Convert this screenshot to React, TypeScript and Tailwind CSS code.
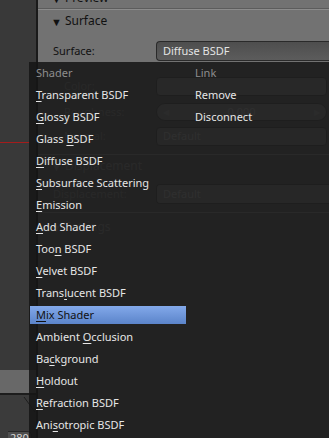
const SHADERS: { label: string; key: number; active?: boolean }[] = [
  { label: "Transparent BSDF", key: 0 },
  { label: "Glossy BSDF", key: 0 },
  { label: "Glass BSDF", key: 6 },
  { label: "Diffuse BSDF", key: 0 },
  { label: "Subsurface Scattering", key: 0 },
  { label: "Emission", key: 0 },
  { label: "Add Shader", key: 0 },
  { label: "Toon BSDF", key: 3 },
  { label: "Velvet BSDF", key: 0 },
  { label: "Translucent BSDF", key: 5 },
  { label: "Mix Shader", key: 0, active: true },
  { label: "Ambient Occlusion", key: 8 },
  { label: "Background", key: 2 },
  { label: "Holdout", key: 0 },
  { label: "Refraction BSDF", key: 0 },
  { label: "Anisotropic BSDF", key: 3 },
];

function Accel({ label, index }: { label: string; index: number }) {
  return (
    <span className="whitespace-nowrap">
      {label.slice(0, index)}
      <span className="underline underline-offset-2 decoration-1">{label[index]}</span>
      {label.slice(index + 1)}
    </span>
  );
}

function NodeEditor() {
  return (
    <div className="w-[36px] shrink-0 bg-[#393939] flex flex-col">
      <div className="h-[142px]" />
      <div className="h-px w-[30px] bg-[#a41c1c]" />
      <div className="h-[227px]" />
      {/* node header peeking in */}
      <div className="h-[23px] bg-[#686868]" />
      <div className="h-[2px] bg-[#1c1c1c]" />
      <div className="flex-1 flex flex-col justify-between bg-[#3b3b3b]">
        <svg width="36" height="18" className="block">
          <line x1="24" y1="2" x2="35" y2="17" stroke="#1e1e1e" strokeWidth="1" />
        </svg>
        <div className="ml-[8px] h-[7px] w-[24px] overflow-hidden rounded-tr-[5px] border-t border-r border-[#262626] bg-[#4e4e4e] pl-[2px] text-[11px] leading-[12px] text-[#d8d8d8]">
          280
        </div>
      </div>
    </div>
  );
}

function Header({ label, className = "" }: { label: string; className?: string }) {
  return (
    <div className={`flex items-center pl-[13px] ${className}`}>
      <span className="text-[11px] leading-none">▼</span>
      <span className="ml-[3px] text-[12px]">{label}</span>
    </div>
  );
}

function Panel() {
  return (
    <div className="flex-1 flex flex-col border-l-2 border-[#1a1a1a] bg-[#727272] text-[#111]">
      <div className="h-[8px] overflow-hidden">
        <Header label="Preview" className="-mt-[13px] h-[22px]" />
      </div>
      <div className="h-px bg-[#5c5c5c]" />
      <div className="h-px bg-[#8c8c8c]" />
      <Header label="Surface" className="h-[22px]" />

      <div className="mt-[9px] flex h-[20px] items-center">
        <span className="w-[118px] pl-[15px]">Surface:</span>
        <div className="flex h-full flex-1 items-center rounded-l-[4px] border border-r-0 border-[#2a2a2a] bg-gradient-to-b from-[#4e4e4e] to-[#5c5c5c] pl-[6px] text-[#e4e4e4]">
          Diffuse BSDF
        </div>
      </div>

      {/* rows hidden under the menu, only faintly visible */}
      <div className="flex flex-col text-[#a4a4a4]">
        <div className="mt-[16px] flex h-[19px] items-center">
          <span className="w-[118px] pl-[26px]">Color:</span>
          <div className="mr-[2px] h-full flex-1 rounded-[4px] border border-[#5a5a5a] bg-[#a2a2a2]" />
        </div>
        <div className="mt-[7px] flex h-[18px] items-center">
          <span className="w-[118px] pl-[26px]">Roughness:</span>
          <div className="mr-[2px] flex h-full flex-1 items-center justify-between rounded-full border border-[#5a5a5a] bg-[#a2a2a2] px-[6px] text-[8px] text-[#bcbcbc]">
            <span>◀</span>
            <span className="text-[11px] text-[#d4d4d4]">0.000</span>
            <span>▶</span>
          </div>
        </div>
        <div className="mt-[6px] flex h-[19px] items-center">
          <span className="w-[118px] pl-[26px]">Normal:</span>
          <div className="mr-[2px] flex h-full flex-1 items-center rounded-[4px] border border-[#5a5a5a] bg-[#989898] pl-[6px] text-[#d4d4d4]">
            Default
          </div>
        </div>
        <div className="mt-[8px] h-px bg-[#a8a8a8]" />
        <Header label="Displacement" className="h-[22px] text-[#acacac]" />
        <div className="mt-[7px] flex h-[20px] items-center">
          <span className="w-[118px] pl-[15px]">Displacement:</span>
          <div className="flex h-full flex-1 items-center rounded-l-[4px] border border-r-0 border-[#5a5a5a] bg-[#989898] pl-[6px] text-[#d4d4d4]">
            Default
          </div>
        </div>
        <div className="mt-[8px] h-px bg-[#a8a8a8]" />
        <Header label="Settings" className="h-[28px] text-[#acacac]" />
      </div>
    </div>
  );
}

function ShaderMenu() {
  return (
    <div className="absolute left-[29px] top-[62px] right-0 bottom-0 flex bg-[#161616]/[0.87] text-[11px] text-[#e6e6e6]">
      <div className="w-[157px] shrink-0 pl-px">
        <div className="flex h-[22px] items-center px-[6px] text-[#8e8e8e]">Shader</div>
        {SHADERS.map(({ label, key, active }) => (
          <div key={label} className="flex h-[22px] items-center">
            <div
              className={`flex h-[18px] w-full items-center px-[6px] ${
                active ? "bg-gradient-to-b from-[#83a9ea] to-[#5b84ca] text-[#111]" : ""
              }`}
            >
              <Accel label={label} index={key} />
            </div>
          </div>
        ))}
      </div>
      <div className="flex-1 pl-[9px]">
        <div className="flex h-[22px] items-center text-[#8e8e8e]">Link</div>
        <div className="flex h-[22px] items-center">Remove</div>
        <div className="flex h-[22px] items-center">Disconnect</div>
      </div>
    </div>
  );
}

export default function App() {
  return (
    <div className="relative flex h-[438px] w-[329px] overflow-hidden font-['Noto_Sans',sans-serif] text-[11px]">
      <NodeEditor />
      <Panel />
      <ShaderMenu />
    </div>
  );
}
